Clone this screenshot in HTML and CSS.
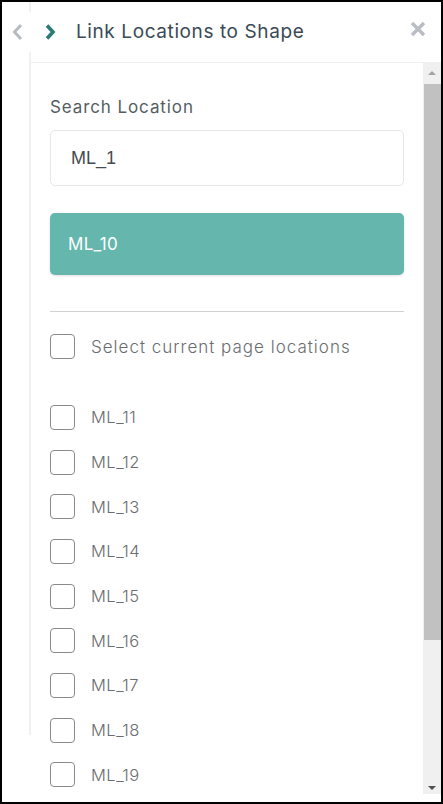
FILE: index.html
```html
<!DOCTYPE html>
<html lang="en">
<head>
    <meta charset="UTF-8">
    <meta name="viewport" content="width=device-width, initial-scale=1.0">
    <title>Link Locations to Shape</title>
    <link rel="stylesheet" href="styles.css">
</head>
<body>
<div class="frame">
    <div class="rail"></div>

    <div class="header">
        <button class="nav-btn" aria-label="Back">
            <svg width="14" height="18" viewBox="0 0 14 18"><path d="M10 2 L3.5 9 L10 16" fill="none" stroke="#b7bbbf" stroke-width="3"/></svg>
        </button>
        <button class="nav-btn" aria-label="Forward">
            <svg width="14" height="18" viewBox="0 0 14 18"><path d="M4 2.5 L10 9 L4 15.5" fill="none" stroke="#2b7b78" stroke-width="3.6"/></svg>
        </button>
        <h1 class="title">Link Locations to Shape</h1>
        <button class="close-btn" aria-label="Close">
            <svg width="16" height="16" viewBox="0 0 16 16"><path d="M2 2 L14 14 M14 2 L2 14" fill="none" stroke="#b9bdc4" stroke-width="3.4"/></svg>
        </button>
    </div>

    <div class="panel">
        <div class="panel-body">
            <label class="field-label" for="search">Search Location</label>
            <input id="search" class="search-input" type="text" value="ML_1">

            <div class="result">ML_10</div>

            <hr class="divider">

            <label class="check-row select-all">
                <span class="box"></span>
                <span>Select current page locations</span>
            </label>

            <!-- location list -->
            <div class="location-list">
                <label class="check-row"><span class="box"></span><span>ML_11</span></label>
                <label class="check-row"><span class="box"></span><span>ML_12</span></label>
                <label class="check-row"><span class="box"></span><span>ML_13</span></label>
                <label class="check-row"><span class="box"></span><span>ML_14</span></label>
                <label class="check-row"><span class="box"></span><span>ML_15</span></label>
                <label class="check-row"><span class="box"></span><span>ML_16</span></label>
                <label class="check-row"><span class="box"></span><span>ML_17</span></label>
                <label class="check-row"><span class="box"></span><span>ML_18</span></label>
                <label class="check-row"><span class="box"></span><span>ML_19</span></label>
            </div>
        </div>

        <div class="scrollbar">
            <div class="arrow-up"></div>
            <div class="track">
                <div class="thumb"></div>
            </div>
            <div class="arrow-down"></div>
        </div>
    </div>
</div>
</body>
</html>
```

FILE: styles.css
```css
* {
    margin: 0;
    padding: 0;
    box-sizing: border-box;
}

body {
    background-color: #fff;
    font-family: "Inter", "Open Sans", sans-serif;
}

.frame {
    position: relative;
    width: 443px;
    height: 804px;
    border: 2px solid #000;
    display: flex;
    flex-direction: column;
    overflow: hidden;
}

.rail {
    position: absolute;
    left: 27px;
    top: 0;
    width: 2px;
    height: 733px;
    background-color: #f1f1f1;
}

.header {
    position: relative;
    height: 60px;
    display: flex;
    align-items: center;
    padding-left: 8px;
}

.header::before {
    content: "";
    position: absolute;
    left: 0;
    right: 0;
    top: 10px;
    height: 40px;
    background-color: #fff;
}

.nav-btn,
.close-btn {
    position: relative;
    border: none;
    background: none;
    display: flex;
    align-items: center;
    justify-content: center;
    cursor: pointer;
}

.nav-btn {
    width: 16px;
    height: 20px;
    margin-right: 16px;
    margin-top: -1px;
}

.title {
    position: relative;
    font-size: 19px;
    font-weight: 400;
    color: #3a4956;
    letter-spacing: 0.6px;
    margin-left: 2px;
    margin-top: -2px;
    flex: 1;
}

.close-btn {
    width: 18px;
    height: 18px;
    margin-right: 14px;
    margin-top: -6px;
}

.panel {
    flex: 1;
    margin-left: 29px;
    border-top: 1px solid #efefef;
    display: flex;
    min-height: 0;
    margin-bottom: 8px;
}

.panel-body {
    flex: 1;
    overflow: hidden;
    padding: 34px 19px 0 19px;
}

.field-label {
    display: block;
    font-size: 17px;
    color: #555d63;
    letter-spacing: 0.9px;
}

.search-input {
    display: block;
    width: 100%;
    height: 56px;
    margin-top: 13px;
    padding: 0 20px;
    border: 1px solid #e6e7e9;
    border-radius: 5px;
    font-family: "Liberation Sans", Arial, sans-serif;
    font-size: 18px;
    color: #454b50;
    outline: none;
}

.result {
    margin-top: 27px;
    height: 62px;
    padding: 0 18px;
    display: flex;
    align-items: center;
    background-color: #65b6ad;
    border-radius: 5px;
    box-shadow: 0 1px 3px rgba(0, 0, 0, 0.12);
    color: #fff;
    font-size: 17px;
    letter-spacing: 0.3px;
}

.divider {
    border: none;
    border-top: 1px solid #d2d2d2;
    margin-top: 36px;
}

.check-row {
    display: flex;
    align-items: center;
    height: 44.7px;
    font-size: 16.5px;
    font-weight: 300;
    color: #6a6d70;
    letter-spacing: 0.5px;
    cursor: pointer;
}

.select-all {
    margin-top: 11px;
    height: 47px;
    font-size: 17px;
    letter-spacing: 1px;
}

.box {
    width: 25px;
    height: 25px;
    border: 1px solid #8a8a8a;
    border-radius: 4px;
    margin-right: 16px;
    flex-shrink: 0;
}

.location-list {
    margin-top: 25px;
}

.scrollbar {
    width: 18px;
    background-color: #f0f0f0;
    display: flex;
    flex-direction: column;
}

.arrow-up,
.arrow-down {
    width: 100%;
    position: relative;
}

.arrow-up {
    height: 21px;
}

.arrow-down {
    height: 17px;
}

.arrow-up::after,
.arrow-down::after {
    content: "";
    position: absolute;
    left: 5px;
    border-left: 4px solid transparent;
    border-right: 4px solid transparent;
}

.arrow-up::after {
    top: 8px;
    border-bottom: 4px solid #a3a3a3;
}

.arrow-down::after {
    top: 9px;
    border-top: 4px solid #505050;
}

.track {
    flex: 1;
    width: 100%;
    padding-left: 1px;
}

.thumb {
    height: 556px;
    background-color: #c1c1c1;
}
```
